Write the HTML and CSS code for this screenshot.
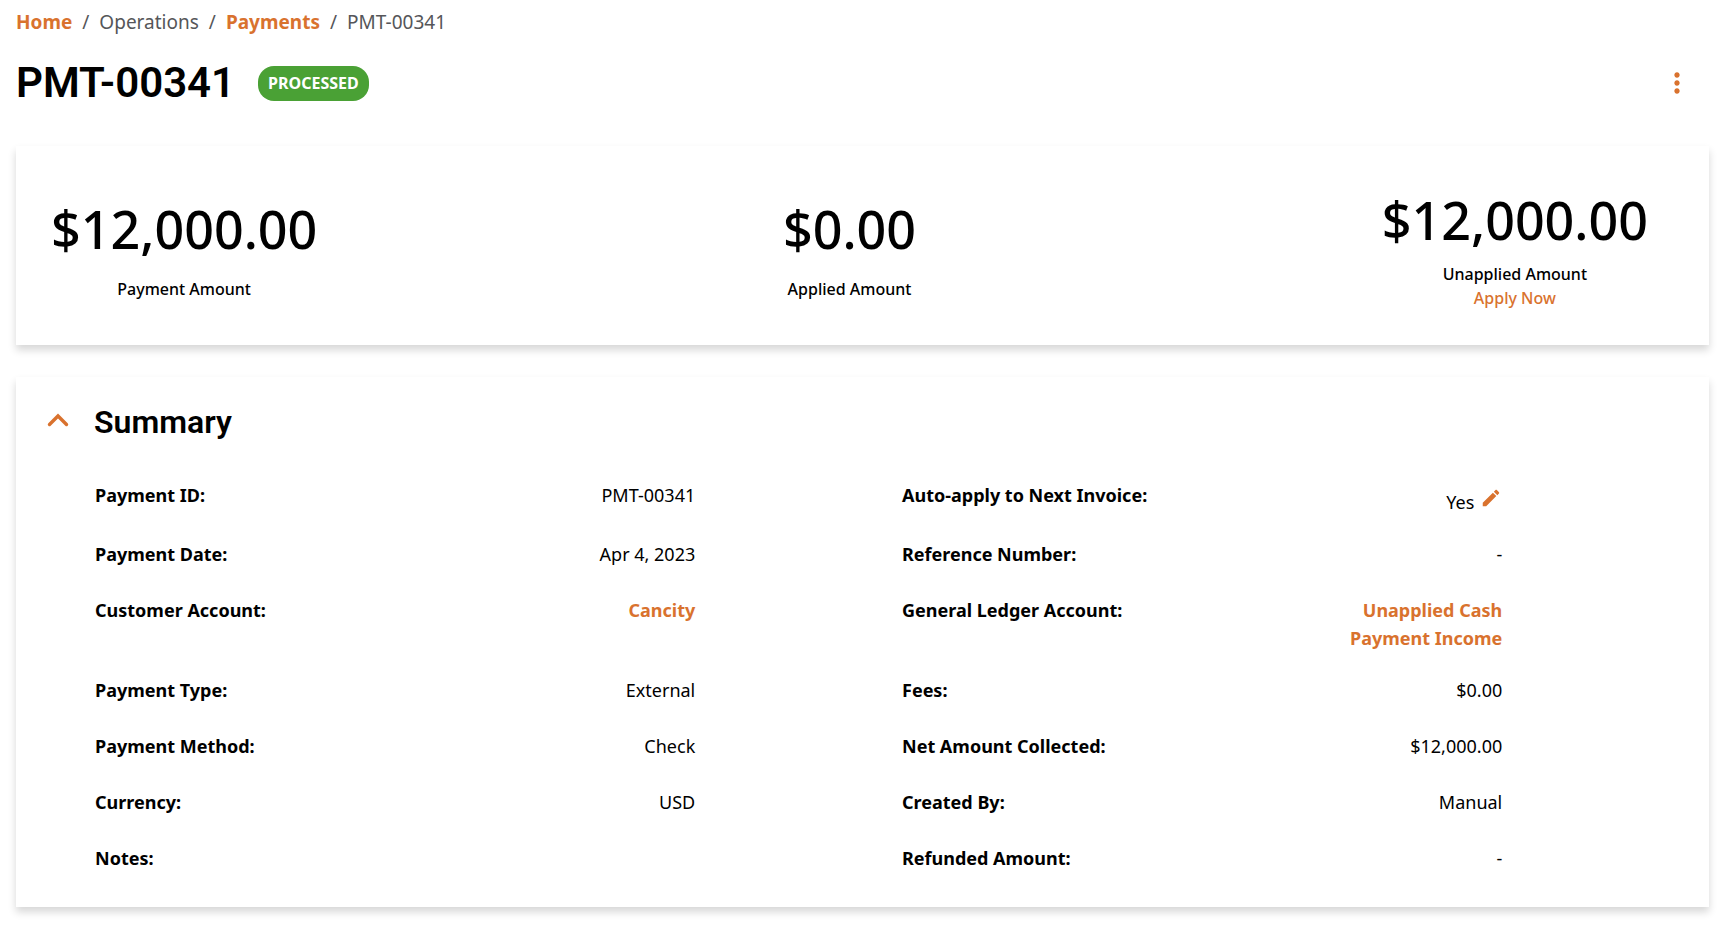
FILE: index.html
```html
<!DOCTYPE html>
<html lang="en">
<head>
<meta charset="utf-8">
<title>PMT-00341</title>
<link rel="stylesheet" href="styles.css">
</head>
<body>
<nav class="breadcrumb" aria-label="Breadcrumb">
  <a class="link" href="#">Home</a>
  <span>/</span>
  <span>Operations</span>
  <span>/</span>
  <a class="link" href="#">Payments</a>
  <span>/</span>
  <span>PMT-00341</span>
</nav>
<header class="header">
  <h1 class="title">PMT-00341</h1>
  <span class="badge">PROCESSED</span>
  <button class="icon-button menu" type="button" aria-label="More actions">
    <svg width="32" height="32" viewBox="0 0 24 24" fill="currentColor"><path d="M12 8c1.100 0 2-.9 2-2s-.9-2-2-2-2 .9-2 2 .9 2 2 2zm0 2c-1.100 0-2 .9-2 2s.9 2 2 2 2-.9 2-2-.9-2-2-2zm0 6c-1.100 0-2 .9-2 2s.9 2 2 2 2-.9 2-2-.9-2-2-2z"/></svg>
  </button>
</header>
<main class="main">
  <section class="card totals">
    <div class="total"><div class="amount">$12,000.00</div><div class="caption">Payment Amount</div></div>
    <div class="total"><div class="amount">$0.00</div><div class="caption">Applied Amount</div></div>
    <div class="total total-action"><div class="amount">$12,000.00</div><div><div class="caption">Unapplied Amount</div><a class="link caption" href="#">Apply Now</a></div></div>
  </section>
  <section class="card summary">
    <div class="summary-head">
      <button class="icon-button" type="button" aria-label="Collapse summary">
        <svg width="24" height="24" viewBox="0 0 24 24" fill="none" stroke="currentColor" stroke-width="3.400" stroke-linecap="round"><path d="M3.500 14.500L12 6l8.500 8.500"/></svg>
      </button>
      <h2 class="subtitle">Summary</h2>
    </div>
    <dl class="details">
      <div class="row"><dt>Payment ID:</dt><dd>PMT-00341</dd></div>
      <div class="row"><dt>Auto-apply to Next Invoice:</dt><dd class="editable"><span>Yes</span>
        <button class="icon-button" type="button" aria-label="Edit auto-apply"><svg width="22" height="22" viewBox="0 0 24 24" fill="currentColor"><path d="M3 17.250V21h3.750L17.810 9.940l-3.750-3.750L3 17.250zM20.710 7.040c.39-.39.39-1.020 0-1.410l-2.340-2.340c-.39-.39-1.020-.39-1.410 0l-1.830 1.830 3.750 3.750 1.830-1.830z"/></svg></button></dd></div>
      <div class="row"><dt>Payment Date:</dt><dd>Apr 4, 2023</dd></div>
      <div class="row"><dt>Reference Number:</dt><dd>-</dd></div>
      <div class="row"><dt>Customer Account:</dt><dd><a class="link" href="#">Cancity</a></dd></div>
      <div class="row"><dt>General Ledger Account:</dt><dd><a class="link" href="#">Unapplied Cash Payment Income</a></dd></div>
      <div class="row"><dt>Payment Type:</dt><dd>External</dd></div>
      <div class="row"><dt>Fees:</dt><dd>$0.00</dd></div>
      <div class="row"><dt>Payment Method:</dt><dd>Check</dd></div>
      <div class="row"><dt>Net Amount Collected:</dt><dd>$12,000.00</dd></div>
      <div class="row"><dt>Currency:</dt><dd>USD</dd></div>
      <div class="row"><dt>Created By:</dt><dd>Manual</dd></div>
      <div class="row"><dt>Notes:</dt><dd></dd></div>
      <div class="row"><dt>Refunded Amount:</dt><dd>-</dd></div>
    </dl>
  </section>
</main>
</body>
</html>
```
FILE: styles.css
```css
* { box-sizing: border-box; }
body {
  margin: 0;
  padding: 8px 23px 24px 16px;
  background: #fff;
  color: #000;
  font: 18px/28px "Noto Sans", sans-serif;
}
h1, h2, dl, dd { margin: 0; }
.link { color: #d9722e; font-weight: 700; text-decoration: none; }
.icon-button {
  display: flex;
  padding: 0;
  border: 0;
  background: none;
  color: #d9722e;
  cursor: pointer;
}
.breadcrumb { display: flex; gap: 10px; color: #555659; font-size: 19px; }
.header { display: flex; align-items: center; margin-top: 19px; }
.title { font: 600 42px/56px Roboto, sans-serif; }
.badge {
  margin-left: 23px;
  padding: 4px 10px;
  border-radius: 16px;
  background: #4aa135;
  color: #fff;
  font-size: 16px;
  font-weight: 700;
  line-height: 27px;
}
.menu { margin-left: auto; margin-right: 16px; }
.main { display: grid; gap: 32px; margin-top: 35px; }
.card { background: #fff; box-shadow: 0 5px 8px rgba(0, 0, 0, 0.16); }
.totals {
  display: flex;
  justify-content: space-between;
  align-items: center;
  min-height: 199px;
  padding: 34px 61px 32px 35px;
}
.total { display: flex; flex-direction: column; align-items: center; gap: 12px; text-align: center; }
.total-action { gap: 6px; }
.amount { font-size: 52px; font-weight: 500; line-height: 72px; }
.caption { display: block; font-size: 16px; font-weight: 500; line-height: 24px; }
.summary { padding: 23px 0 19px 30px; }
.summary-head { display: flex; align-items: center; gap: 24px; }
.subtitle { font: 600 32px/44px Roboto, sans-serif; }
.details { display: grid; grid-template-columns: 1fr 1fr; margin: 25px 0 0 49px; }
.row {
  display: grid;
  grid-template-columns: 2fr 1fr 1fr;
  min-height: 56px;
  padding: 12px 0;
}
dt { font-weight: 700; }
dd { padding-right: 5px; text-align: right; }
.editable { display: flex; justify-content: flex-end; align-items: flex-start; gap: 6px; }
.editable span { padding-top: 7px; }
.editable .icon-button { padding-top: 6px; }
```
